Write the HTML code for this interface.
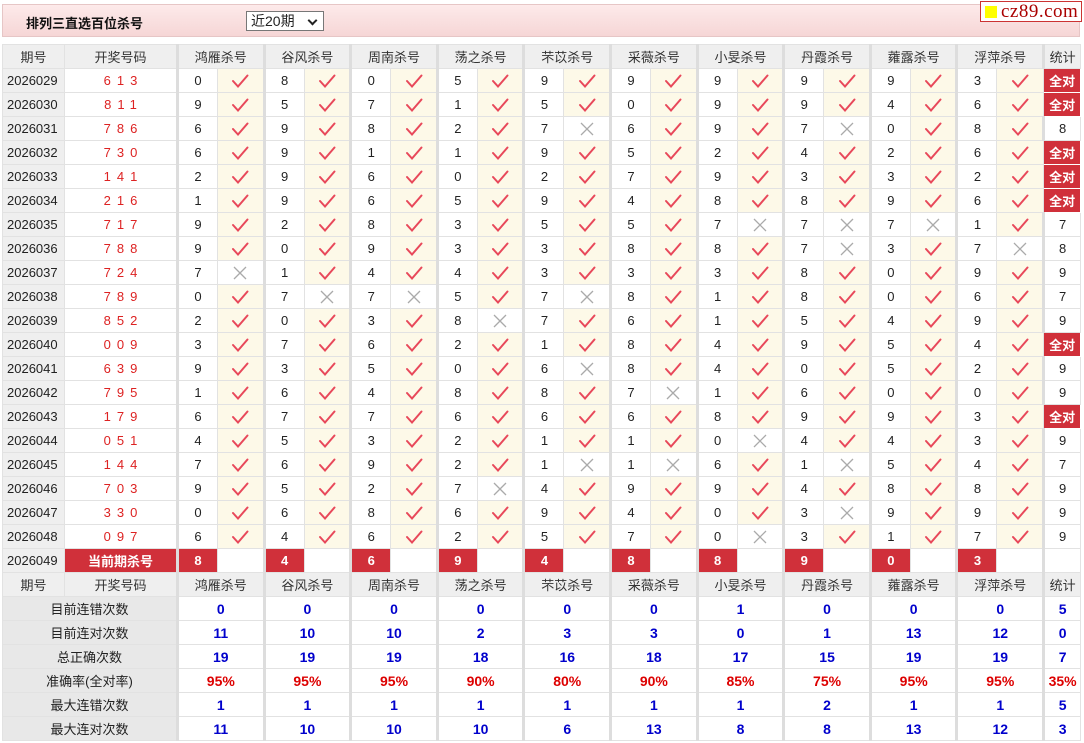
<!DOCTYPE html>
<html><head><meta charset="utf-8">
<style>
*{margin:0;padding:0;box-sizing:border-box}
body{width:1084px;height:743px;background:#fff;font-family:"Liberation Sans","Noto Sans CJK SC",sans-serif;font-size:13px;color:#222;position:relative;overflow:hidden}
.top{position:absolute;left:2px;top:4px;width:1078px;height:33px;background:linear-gradient(#fdeaea,#f6d6d6);border:1px solid #e6c6c6}
.title{position:absolute;left:23px;top:8px;font-weight:bold;font-size:13px;color:#111}
.sel{position:absolute;left:243px;top:6px;width:78px;height:20px;border:1px solid #777;background:#fff;font-size:14px;padding-left:4px;line-height:18px}
.sel:after{content:"";position:absolute;right:7px;top:5px;width:5px;height:5px;border-right:2px solid #222;border-bottom:2px solid #222;transform:rotate(45deg)}
.logo{position:absolute;left:980px;top:1px;width:102px;height:21px;background:#fff;border:1px solid #c33;font-family:"Liberation Serif",serif;font-size:19px;color:#a00;line-height:19px;padding-left:20px;letter-spacing:0.5px}
.logo:before{content:"";position:absolute;left:4px;top:4px;width:12px;height:12px;background:#ff0}
table{position:absolute;left:2px;top:44px;border-collapse:collapse;table-layout:fixed;width:1078px}
td{height:24px;border:1px solid #e2e2e2;text-align:center;padding:0;white-space:nowrap}
.h td{background:#efefef;color:#333}
.p{background:#efefef;text-align:left;padding-left:4px}
.k{color:#d22;letter-spacing:6px;padding-left:6px}
.n{border-left:3px solid #ddd}
.c{background:#fdf9e8}
.x{background:#fff}
.qd{background:#d0303a;color:#fff;font-weight:bold;border:1px solid #fff}
.cur{background:#d0303a;color:#fff;font-weight:bold}
.lab{background:#e8e8e8;color:#222}
.b{color:#0000cc;font-weight:bold;font-size:14px}
.r{color:#d00;font-weight:bold;font-size:14px}
svg{display:block;margin:auto}
</style></head><body>
<div class="top"><div class="title">排列三直选百位杀号</div><div class="sel">近20期</div></div>
<div class="logo">cz89.com</div>
<table id="t"></table>
<script>
var names=["鸿雁杀号","谷风杀号","周南杀号","荡之杀号","芣苡杀号","采薇杀号","小旻杀号","丹霞杀号","蕹露杀号","浮萍杀号"];
var rows=[
["2026029","613","0v8v0v5v9v9v9v9v9v3v","全对"],
["2026030","811","9v5v7v1v5v0v9v9v4v6v","全对"],
["2026031","786","6v9v8v2v7x6v9v7x0v8v","8"],
["2026032","730","6v9v1v1v9v5v2v4v2v6v","全对"],
["2026033","141","2v9v6v0v2v7v9v3v3v2v","全对"],
["2026034","216","1v9v6v5v9v4v8v8v9v6v","全对"],
["2026035","717","9v2v8v3v5v5v7x7x7x1v","7"],
["2026036","788","9v0v9v3v3v8v8v7x3v7x","8"],
["2026037","724","7x1v4v4v3v3v3v8v0v9v","9"],
["2026038","789","0v7x7x5v7x8v1v8v0v6v","7"],
["2026039","852","2v0v3v8x7v6v1v5v4v9v","9"],
["2026040","009","3v7v6v2v1v8v4v9v5v4v","全对"],
["2026041","639","9v3v5v0v6x8v4v0v5v2v","9"],
["2026042","795","1v6v4v8v8v7x1v6v0v0v","9"],
["2026043","179","6v7v7v6v6v6v8v9v9v3v","全对"],
["2026044","051","4v5v3v2v1v1v0x4v4v3v","9"],
["2026045","144","7v6v9v2v1x1x6v1x5v4v","7"],
["2026046","703","9v5v2v7x4v9v9v4v8v8v","9"],
["2026047","330","0v6v8v6v9v4v0v3x9v9v","9"],
["2026048","097","6v4v6v2v5v7v0x3v1v7v","9"]];
var V='<svg width="20" height="16" viewBox="0 0 20 16"><path d="M3 8 L8 13.5 L17.5 2.5" fill="none" stroke="#e8485a" stroke-width="2" stroke-linecap="round"/></svg>';
var X='<svg width="16" height="16" viewBox="0 0 16 16"><path d="M2 2 L14 14 M14 2 L2 14" fill="none" stroke="#aaa" stroke-width="1.3"/></svg>';
var h='<tr class="h"><td>期号</td><td>开奖号码</td>';
var cg='';
for(var i=0;i<10;i++){h+='<td colspan="2" class="n">'+names[i]+'</td>';cg+='<col style="width:40px"><col style="width:46.6px">';}
h+='<td class="n">统计</td></tr>';
cg+='<col style="width:37px">';
var s='<colgroup><col style="width:62px"><col style="width:113px">'+cg+'</colgroup>'+h;
rows.forEach(function(r){
 s+='<tr><td class="p">'+r[0]+'</td><td class="k">'+r[1]+'</td>';
 for(var i=0;i<10;i++){var n=r[2][i*2],m=r[2][i*2+1];
  s+='<td class="n">'+n+'</td><td class="'+(m=='v'?'c':'x')+'">'+(m=='v'?V:X)+'</td>';}
 s+=r[3]=='全对'?'<td class="n qd">全对</td>':'<td class="n">'+r[3]+'</td>';
 s+='</tr>';
});
var cur=[8,4,6,9,4,8,8,9,0,3];
s+='<tr><td class="p">2026049</td><td class="cur">当前期杀号</td>';
cur.forEach(function(c){s+='<td class="n cur">'+c+'</td><td></td>';});
s+='<td class="n"></td></tr>'+h;
var st=[["目前连错次数","0 0 0 0 0 0 1 0 0 0 5"],["目前连对次数","11 10 10 2 3 3 0 1 13 12 0"],["总正确次数","19 19 19 18 16 18 17 15 19 19 7"],["准确率(全对率)","95% 95% 95% 90% 80% 90% 85% 75% 95% 95% 35%"],["最大连错次数","1 1 1 1 1 1 1 2 1 1 5"],["最大连对次数","11 10 10 10 6 13 8 8 13 12 3"]];
st.forEach(function(r){var v=r[1].split(' ');
 s+='<tr><td colspan="2" class="lab">'+r[0]+'</td>';
 for(var i=0;i<10;i++){s+='<td colspan="2" class="n '+(v[i].indexOf('%')>0?'r':'b')+'">'+v[i]+'</td>';}
 s+='<td class="n '+(v[10].indexOf('%')>0?'r':'b')+'">'+v[10]+'</td></tr>';
});
document.getElementById('t').innerHTML=s;
</script>
</body></html>
